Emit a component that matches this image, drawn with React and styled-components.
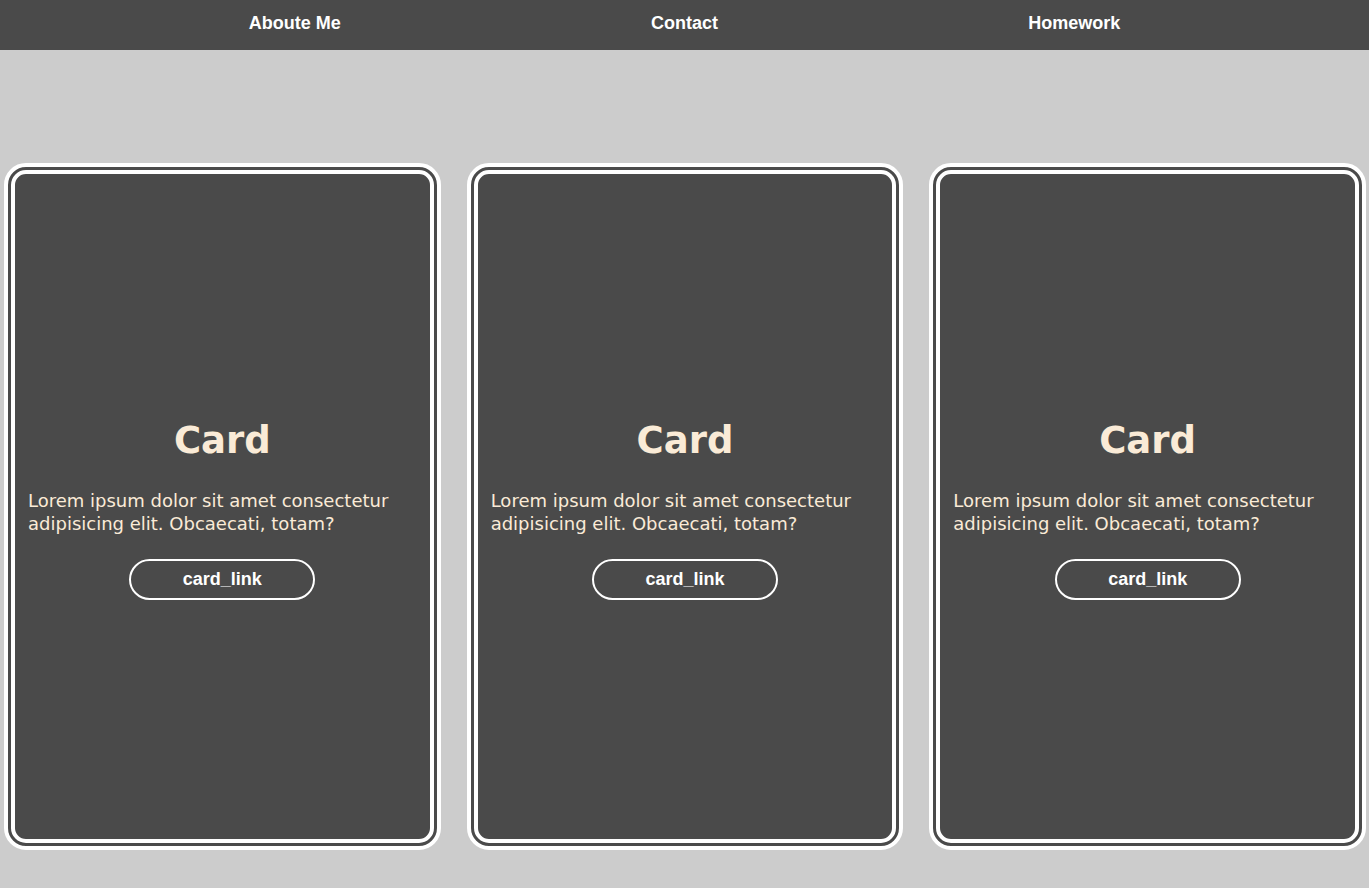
import React from 'react'
import styled, { createGlobalStyle } from 'styled-components'

const GlobalStyle = createGlobalStyle`
    * {
        box-sizing: border-box;
    }

    body {
        margin: 0;
        background-color: #cccccc;
        font-family: "Liberation Sans", Arial, sans-serif;
    }
`

const cards = [1, 2, 3]

const navLinks = ['Aboute Me', 'Contact', 'Homework']

export default function App() {
    return (
        <>
            <GlobalStyle />
            <Header>
                <Nav>
                    {navLinks.map((item) => (
                        <NavItem key={item}>
                            <NavLink href="#">{item}</NavLink>
                        </NavItem>
                    ))}
                </Nav>
            </Header>

            <Main>
                {cards.map((item) => (
                    <Card key={item}>
                        <Title>Card</Title>
                        <Text>
                            Lorem ipsum dolor sit amet consectetur adipisicing elit. Obcaecati, totam?
                        </Text>
                        <CardLink href="#">card_link</CardLink>
                    </Card>
                ))}
            </Main>
        </>
    )
}

const Header = styled.header`
    height: 50px;
    background-color: #4a4a4a;
    display: flex;
    align-items: center;
`

const Nav = styled.ul`
    list-style: none;
    margin: 0;
    padding: 0 100px 3px 100px;
    width: 100%;
    display: flex;
`

const NavItem = styled.li`
    flex: 1;
    text-align: center;
`

const NavLink = styled.a`
    color: #ffffff;
    text-decoration: none;
    font-family: "Liberation Sans Narrow", "Arial Narrow", "Liberation Sans", sans-serif;
    font-weight: bold;
    font-size: 18px;
`

const Main = styled.main`
    display: grid;
    grid-template-columns: repeat(3, 1fr);
    gap: 26px;
    padding: 113px 3px 39px 4px;
`

const Card = styled.div`
    height: 687px;
    background-color: #4a4a4a;
    border: 11px double #ffffff;
    border-radius: 22px;
    padding: 8px 13px 0 13px;
    display: flex;
    flex-direction: column;
    justify-content: center;
    align-items: center;
`

const Title = styled.h2`
    margin: 0 0 28px 0;
    color: #faebd7;
    font-family: "Trebuchet MS", "DejaVu Sans", sans-serif;
    font-size: 37px;
    font-weight: bold;
    line-height: 1.1;
`

const Text = styled.p`
    margin: 0 0 24px 0;
    align-self: stretch;
    color: #faebd7;
    font-family: "Trebuchet MS", "DejaVu Sans", sans-serif;
    font-size: 18px;
    line-height: 23px;
`

const CardLink = styled.a`
    width: 186px;
    height: 41px;
    border: 2px solid #ffffff;
    border-radius: 21px;
    display: flex;
    align-items: center;
    justify-content: center;
    color: #ffffff;
    text-decoration: none;
    font-family: "Liberation Sans", Arial, sans-serif;
    font-weight: bold;
    font-size: 18px;
`
